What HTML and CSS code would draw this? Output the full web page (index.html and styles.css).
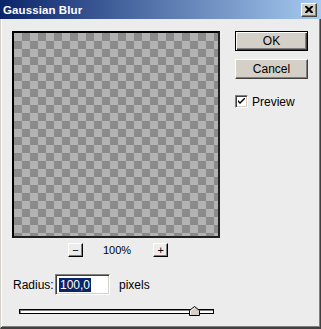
FILE: index.html
```html
<!DOCTYPE html>
<html>
<head>
<meta charset="utf-8">
<link rel="stylesheet" href="styles.css">
</head>
<body>
<div class="window">
  <div class="titlebar">
    <span class="title">Gaussian Blur</span>
    <button class="close" aria-label="Close">
      <svg width="8" height="7" viewBox="0 0 8 7"><path d="M0 0h2l2 2 2-2h2v1l-2.5 2.5L8 6v1H6L4 5 2 7H0V6l2.5-2.5L0 1z" fill="#000"/></svg>
    </button>
  </div>
  <div class="content">
    <div class="top">
      <div class="left">
        <div class="preview"></div>
        <div class="zoomrow">
          <button class="zbtn">−</button>
          <span class="pct">100%</span>
          <button class="zbtn">+</button>
        </div>
      </div>
      <div class="side">
        <button class="btn default">OK</button>
        <button class="btn">Cancel</button>
        <label class="check">
          <span class="box"><svg width="7" height="7" viewBox="0 0 7 7"><path d="M0 2l2 2 5-5v2l-5 5-2-2z" fill="#000"/></svg></span>
          <span>Preview</span>
        </label>
      </div>
    </div>
    <div class="radius">
      <span class="lbl">Radius:</span>
      <span class="input"><span class="sel">100,0</span></span>
      <span class="unit">pixels</span>
    </div>
    <div class="slider">
      <div class="track"></div>
      <svg class="thumb" width="11" height="10" viewBox="0 0 11 10"><path d="M0.5 9.5V4.5L5.5 0.5L10.5 4.5V9.5Z" fill="#d4d0c8" stroke="#000"/><path d="M1.5 8.5V5L5.5 1.8" fill="none" stroke="#fff"/></svg>
    </div>
  </div>
</div>
</body>
</html>
```

FILE: styles.css
```css
* { box-sizing: border-box; }
html, body { margin: 0; padding: 0; background: #ececec; }
body {
  font-family: "Liberation Sans", Arial, sans-serif;
  font-size: 12px;
  color: #000;
}
.window {
  width: 321px;
  height: 329px;
  background: #ececec;
  border-left: 1px solid #d4d0c8;
  border-right: 1px solid #404040;
  border-bottom: 2px solid #404040;
  box-shadow: inset 1px 0 0 #fff, inset -1px -1px 0 #808080;
  display: flex;
  flex-direction: column;
}
.titlebar {
  height: 19px;
  margin-left: -1px;
  margin-right: -1px;
  background: linear-gradient(to right, #0a246a, #a6caf0);
  display: flex;
  align-items: center;
  justify-content: space-between;
  padding: 0 4px 0 3px;
}
.title {
  color: #fff;
  font-weight: bold;
  font-size: 11.5px;
  letter-spacing: 0.1px;
}
.close {
  width: 16px;
  height: 14px;
  padding: 0;
  margin: 0;
  background: #d4d0c8;
  border: 1px solid;
  border-color: #fff #404040 #404040 #fff;
  box-shadow: inset -1px -1px 0 #808080;
  display: flex;
  align-items: center;
  justify-content: center;
}
.content {
  padding: 12px 0 0 11px;
  display: flex;
  flex-direction: column;
}
.top {
  display: flex;
}
.left {
  width: 208px;
  display: flex;
  flex-direction: column;
}
.preview {
  width: 208px;
  height: 207px;
  border: 2px solid #000;
  border-right-color: #202020;
  border-bottom-color: #202020;
  background-color: #b2b2b2;
  background-image:
    linear-gradient(45deg, #8b8b8b 25%, transparent 25%, transparent 75%, #8b8b8b 75%),
    linear-gradient(45deg, #8b8b8b 25%, transparent 25%, transparent 75%, #8b8b8b 75%);
  background-size: 16px 16px;
  background-position: 0 0, 8px 8px;
}
.zoomrow {
  display: flex;
  align-items: center;
  margin-top: 5px;
  padding-left: 56px;
  height: 14px;
}
.zbtn {
  width: 15px;
  height: 14px;
  padding: 0;
  margin: 0;
  font-family: "Liberation Sans", Arial, sans-serif;
  font-size: 11px;
  line-height: 11px;
  background: #ececec;
  border: 1px solid;
  border-color: #fff #000 #000 #fff;
  box-shadow: inset -1px -1px 0 #808080;
  color: #000;
}
.pct {
  margin: 0 22px 0 20px;
  font-size: 11px;
}
.side {
  margin-left: 15px;
  display: flex;
  flex-direction: column;
}
.btn {
  width: 73px;
  height: 20px;
  padding: 0;
  margin: 0;
  font-family: "Liberation Sans", Arial, sans-serif;
  font-size: 12px;
  background: #d4d0c8;
  border: 1px solid;
  border-color: #fff #404040 #404040 #fff;
  box-shadow: inset -1px -1px 0 #808080;
  color: #000;
}
.btn + .btn { margin-top: 8px; }
.btn.default {
  border: 1px solid #000;
  box-shadow: inset 1px 1px 0 #fff, inset -1px -1px 0 #404040, inset -2px -2px 0 #808080;
}
.check {
  display: flex;
  align-items: center;
  margin-top: 16px;
  height: 13px;
  font-size: 12px;
}
.box {
  width: 13px;
  height: 13px;
  background: #fff;
  border: 1px solid;
  border-color: #808080 #fff #fff #808080;
  box-shadow: inset 1px 1px 0 #404040, inset -1px -1px 0 #d4d0c8;
  display: flex;
  align-items: center;
  justify-content: center;
  margin-right: 4px;
}
.radius {
  display: flex;
  align-items: center;
  margin-top: 17px;
  height: 21px;
  padding-left: 1px;
}
.lbl { width: 42px; font-size: 12px; }
.input {
  width: 55px;
  height: 21px;
  background: #fff;
  border: 1px solid;
  border-color: #808080 #fff #fff #808080;
  box-shadow: inset 1px 1px 0 #404040, inset -1px -1px 0 #d4d0c8;
  display: flex;
  align-items: center;
  padding-left: 3px;
}
.sel {
  background: #0a246a;
  color: #fff;
  font-size: 12px;
  line-height: 14px;
  padding: 0 1px;
}
.unit { margin-left: 9px; font-size: 12px; }
.slider {
  position: relative;
  margin-top: 11px;
  margin-left: 7px;
  width: 195px;
  height: 10px;
}
.track {
  position: absolute;
  left: 0;
  top: 3px;
  width: 195px;
  height: 5px;
  background: #fff;
  border: 1px solid #000;
  box-shadow: inset 1px 1px 0 #808080;
}
.thumb {
  position: absolute;
  left: 170px;
  top: 0;
}
```
